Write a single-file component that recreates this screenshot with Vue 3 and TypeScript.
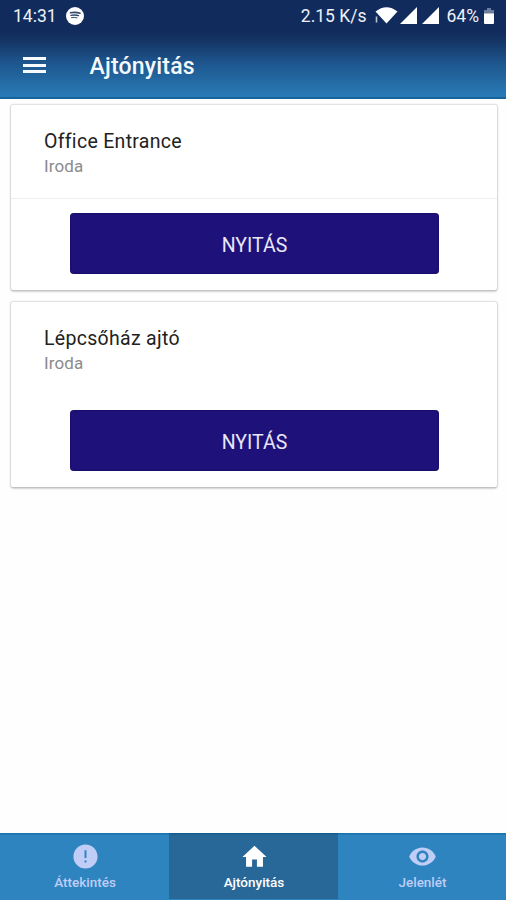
<script setup lang="ts">
interface Door {
  name: string
  place: string
  divided: boolean
}

interface Tab {
  label: string
  icon: string
  active: boolean
}

const doors: Door[] = [
  { name: 'Office Entrance', place: 'Iroda', divided: true },
  { name: 'Lépcsőház ajtó', place: 'Iroda', divided: false },
]

const tabs: Tab[] = [
  {
    label: 'Áttekintés',
    icon: 'M12 2C6.48 2 2 6.48 2 12s4.48 10 10 10 10-4.48 10-10S17.52 2 12 2zm.8 15h-1.600v-1.600h1.600v1.600zm0-3.700h-1.600V6.800h1.600v6.500z',
    active: false,
  },
  { label: 'Ajtónyitás', icon: 'M10 20.500v-6h4v6h5v-8h3L12 3 2 12.500h3v8z', active: true },
  {
    label: 'Jelenlét',
    icon: 'M12 4.5C7 4.5 2.73 7.61 1 12c1.73 4.39 6 7.5 11 7.5s9.27-3.11 11-7.5c-1.73-4.39-6-7.5-11-7.5zM12 17c-2.76 0-5-2.24-5-5s2.24-5 5-5 5 2.24 5 5-2.24 5-5 5zm0-8c-1.66 0-3 1.34-3 3s1.34 3 3 3 3-1.34 3-3-1.34-3-3-3z',
    active: false,
  },
]
</script>

<template>
  <div class="screen">
    <header class="header">
      <div class="status">
        <span class="clock">14:31</span>
        <svg class="music" viewBox="0 0 18 18">
          <circle cx="9" cy="9" r="9" fill="#fff" />
          <g fill="none" stroke="#34486b" stroke-linecap="round">
            <path d="M4.500 5.800q5-1 9.500.4" stroke-width="1.600" />
            <path d="M5 8.300q4.500-.8 7.500.4" stroke-width="1.300" />
            <path d="M5.500 10.600q3.500-.6 5.500.2" stroke-width="1" />
          </g>
        </svg>
        <span class="speed">2.15 K/s</span>
        <svg class="wifi" viewBox="0 0 23 17">
          <path d="M.5 4.500Q11.500-4 22.500 4.500L11.500 16.500z" fill="#fff" />
          <path d="M1.500 9.500v6" stroke="#b8c3d6" stroke-width="1.600" />
        </svg>
        <svg class="signal" viewBox="0 0 17 17"><path d="M17 0v17H0z" fill="#fff" /></svg>
        <svg class="signal second" viewBox="0 0 17 17"><path d="M17 0v17H0z" fill="#fff" /></svg>
        <span class="charge">64%</span>
        <svg class="battery" viewBox="0 0 10 16">
          <path d="M3 0h4v2h3v5H0V2h3z" fill="#6d7da0" />
          <path d="M0 5.500h10V15q0 1-1 1H1q-1 0-1-1z" fill="#fff" />
        </svg>
      </div>
      <div class="toolbar">
        <button class="menu" aria-label="Menü"><i></i><i></i><i></i></button>
        <h1 class="title">Ajtónyitás</h1>
      </div>
    </header>

    <main class="doors">
      <section v-for="door in doors" :key="door.name" class="card">
        <div class="info" :class="{ divided: door.divided }">
          <h2 class="name">{{ door.name }}</h2>
          <p class="place">{{ door.place }}</p>
        </div>
        <button class="open">NYITÁS</button>
      </section>
    </main>

    <nav class="tabs">
      <button v-for="tab in tabs" :key="tab.label" class="tab" :class="{ active: tab.active }">
        <svg class="tab-icon" viewBox="0 0 24 24"><path :d="tab.icon" fill="currentColor" /></svg>
        <span class="tab-label">{{ tab.label }}</span>
      </button>
    </nav>
  </div>
</template>

<style>
body {
  margin: 0;
}
</style>

<style scoped>
.screen {
  display: flex;
  flex-direction: column;
  height: 900px;
  overflow: hidden;
  background: #fefefe;
  font-family: Roboto, sans-serif;
}

button {
  box-sizing: border-box;
  margin: 0;
  padding: 0;
  border: 0;
  font-family: inherit;
}

.header {
  box-sizing: border-box;
  flex: none;
  height: 99px;
  border-bottom: 2px solid #13659c;
  background: linear-gradient(#112c5c 0, #112c5c 32px, #153667 42px, #1d558c 62px, #2776b1 92px, #2779b5 97px);
}

.status {
  display: flex;
  align-items: center;
  height: 32px;
  padding: 0 12px 0 13px;
  color: #eef1f7;
  font-size: 17.500px;
  white-space: nowrap;
}

.music {
  width: 18px;
  height: 18px;
  margin: -1px 0 0 9px;
}

.speed {
  margin-left: auto;
}

.wifi {
  width: 23px;
  height: 17px;
  margin: -1px 0 0 8px;
}

.signal {
  width: 17px;
  height: 17px;
  margin: -1px 0 0 2.500px;
}

.second {
  margin-left: 4.500px;
}

.charge {
  margin-left: 8px;
}

.battery {
  width: 10px;
  height: 16px;
  margin: -1px 0 0 5px;
}

.toolbar {
  display: flex;
  align-items: center;
  height: 65px;
  padding: 1px 0 0 23px;
  box-sizing: border-box;
}

.menu {
  display: flex;
  flex-direction: column;
  gap: 3.500px;
  width: 23px;
  background: none;
}

.menu i {
  height: 3px;
  background: #f7fbff;
}

.title {
  margin: 4px 0 0 43.500px;
  color: #f5f9fd;
  font-size: 23px;
  font-weight: 500;
  line-height: 28px;
  letter-spacing: 0.200px;
}

.doors {
  display: flex;
  flex: 1;
  flex-direction: column;
  gap: 12px;
  padding: 6px 9px 0 11px;
}

.card {
  display: flex;
  flex-direction: column;
  align-items: center;
  height: 185px;
  border-radius: 2px;
  background: #fff;
  box-shadow: 0 0 1.500px 1px rgba(0, 0, 0, 0.13), 0 1.500px 2px rgba(0, 0, 0, 0.15);
}

.info {
  box-sizing: border-box;
  width: 100%;
  height: 94px;
  padding: 24px 33px 0;
  border-bottom: 1.500px solid transparent;
}

.divided {
  border-bottom-color: #eee;
}

.name {
  margin: 0;
  color: #222;
  font-size: 19.500px;
  font-weight: 400;
  line-height: 25px;
  letter-spacing: 0.300px;
}

.place {
  margin: 0;
  color: #8b8b8b;
  font-size: 17px;
  line-height: 25px;
  letter-spacing: 0.100px;
}

.open {
  width: 369px;
  height: 61px;
  margin-top: 14px;
  border-radius: 4px;
  background: #1e127a;
  box-shadow: inset 0 0 1.500px #070044;
  color: #e8e6f7;
  font-size: 19.500px;
  line-height: 61px;
  padding: 2px 0 0 1px;
}

.tabs {
  display: grid;
  flex: none;
  grid-template-columns: 169px 169px 1fr;
  height: 67px;
  background: #2d84bf;
  box-shadow: inset 0 1.500px #1873ab;
}

.tab {
  display: flex;
  flex-direction: column;
  align-items: center;
  height: 66px;
  padding: 9px 0 0 1px;
  background: none;
  color: #bfcdf7;
}

.active {
  background: #286899;
  box-shadow: inset 0 1.500px #155c8f;
  color: #fff;
}

.tab-icon {
  flex: none;
  width: 29px;
  height: 29px;
}

.tab-label {
  margin-top: 3px;
  font-size: 13.500px;
  font-weight: 500;
  line-height: 17px;
}
</style>
